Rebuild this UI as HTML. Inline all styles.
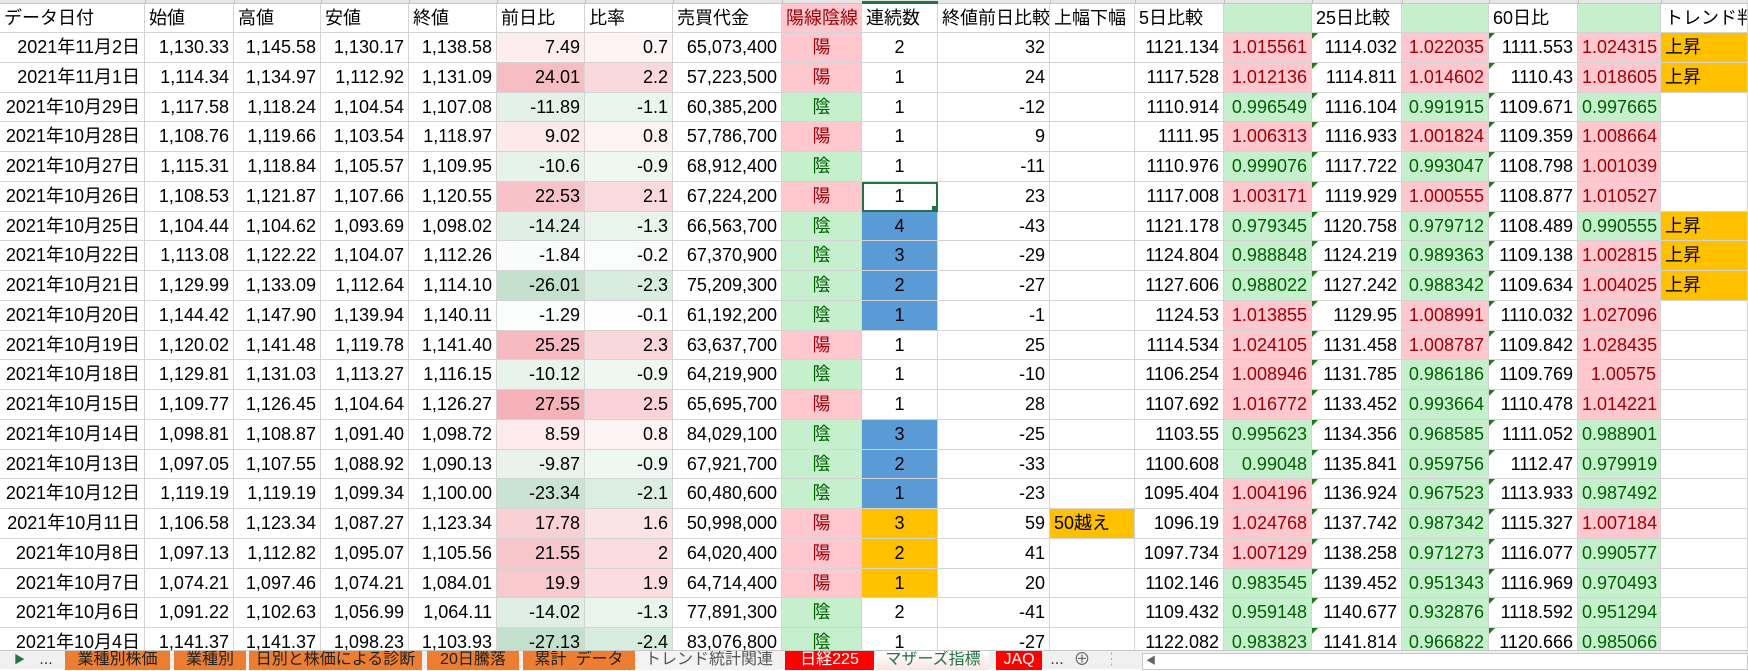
<!DOCTYPE html>
<html><head><meta charset="utf-8">
<style>
*{box-sizing:border-box;margin:0;padding:0}
body{width:1748px;height:669px;overflow:hidden;background:#fff;font-family:"Liberation Sans","Noto Sans CJK JP",sans-serif;font-size:18px;color:#000;position:relative}
.top{position:absolute;left:0;top:0;width:1748px;height:4px;background:#e6e6e6;border-bottom:1px solid #c8c8c8}
.top i{position:absolute;top:0;width:1px;height:4px;background:#c0c0c0}
.grid{position:absolute;left:0;top:4px}
.row{display:flex;height:29.75px}
.hd{height:29px}
.row>div{flex:none;border-right:1px solid #d4d4d4;border-bottom:1px solid #d4d4d4;white-space:nowrap;overflow:hidden;line-height:28px;padding:0 4px;position:relative}
.hd>div{line-height:28px;padding-left:4px}
.r{text-align:right}.c{text-align:center}
.p{background:#ffc7ce;color:#9c0006}
.g{background:#c6efce;color:#006100}
.o{background:#ffc000}
.b{background:#5b9bd5}
.t::before{content:"";position:absolute;left:0;top:0;border-top:6px solid #1f7a1f;border-right:6px solid transparent}
.sel{outline:2px solid #217346;outline-offset:-2px}
.sel::after{content:"";position:absolute;right:-1px;bottom:-1px;width:6px;height:6px;background:#217346}
.w0{width:145px}.w1{width:89px}.w2{width:87px}.w3{width:88px}.w4{width:88px}.w5{width:88px}.w6{width:88px}.w7{width:109px}.w8{width:80px}.w9{width:76px}.w10{width:112px}.w11{width:85px}.w12{width:89px}.w13{width:88px}.w14{width:90px}.w15{width:87px}.w16{width:89px}.w17{width:83px}.w18{width:87px}
.tabs{position:absolute;left:0;top:650px;width:1748px;height:19px;background:#f0f0f0;border-top:1px solid #c8c8c8;font-size:16px;line-height:18px}
.tab{position:absolute;top:0;height:19px;text-align:center;overflow:hidden;white-space:nowrap}
.or{background:#ed7d31;color:#222}
.rd{background:#ff0000;color:#fff}
</style></head><body>
<div class="top"><i style="left:145px"></i><i style="left:234px"></i><i style="left:321px"></i><i style="left:409px"></i><i style="left:497px"></i><i style="left:585px"></i><i style="left:673px"></i><i style="left:782px"></i><i style="left:1050px"></i><i style="left:1135px"></i><i style="left:1224px"></i><i style="left:1312px"></i><i style="left:1402px"></i><i style="left:1489px"></i><i style="left:1578px"></i><i style="left:1661px"></i><div style="position:absolute;left:862px;top:1px;width:76px;height:3px;background:#217346"></div></div>
<div class="grid">
<div class="row hd"><div class="w0">データ日付</div><div class="w1">始値</div><div class="w2">高値</div><div class="w3">安値</div><div class="w4">終値</div><div class="w5">前日比</div><div class="w6">比率</div><div class="w7">売買代金</div><div class="w8 p">陽線陰線</div><div class="w9">連続数</div><div class="w10">終値前日比較</div><div class="w11">上幅下幅</div><div class="w12">5日比較</div><div class="w13 g"></div><div class="w14">25日比較</div><div class="w15 g"></div><div class="w16">60日比</div><div class="w17 g"></div><div class="w18">トレンド判</div></div>

<div class="row"><div class="w0 r">2021年11月2日</div><div class="w1 r">1,130.33</div><div class="w2 r">1,145.58</div><div class="w3 r">1,130.17</div><div class="w4 r">1,138.58</div><div class="w5 r" style="background:#feedee">7.49</div><div class="w6 r" style="background:#fef4f5">0.7</div><div class="w7 r">65,073,400</div><div class="w8 c p">陽</div><div class="w9 c">2</div><div class="w10 r">32</div><div class="w11"></div><div class="w12 r">1121.134</div><div class="w13 r p">1.015561</div><div class="w14 r t">1114.032</div><div class="w15 r p">1.022035</div><div class="w16 r t">1111.553</div><div class="w17 r p">1.024315</div><div class="w18 o">上昇</div></div>
<div class="row"><div class="w0 r">2021年11月1日</div><div class="w1 r">1,114.34</div><div class="w2 r">1,134.97</div><div class="w3 r">1,112.92</div><div class="w4 r">1,131.09</div><div class="w5 r" style="background:#f6bec3">24.01</div><div class="w6 r" style="background:#fad8db">2.2</div><div class="w7 r">57,223,500</div><div class="w8 c p">陽</div><div class="w9 c">1</div><div class="w10 r">24</div><div class="w11"></div><div class="w12 r">1117.528</div><div class="w13 r p">1.012136</div><div class="w14 r t">1114.811</div><div class="w15 r p">1.014602</div><div class="w16 r t">1110.43</div><div class="w17 r p">1.018605</div><div class="w18 o">上昇</div></div>
<div class="row"><div class="w0 r">2021年10月29日</div><div class="w1 r">1,117.58</div><div class="w2 r">1,118.24</div><div class="w3 r">1,104.54</div><div class="w4 r">1,107.08</div><div class="w5 r" style="background:#e4f1e8">-11.89</div><div class="w6 r" style="background:#ebf5ef">-1.1</div><div class="w7 r">60,385,200</div><div class="w8 c g">陰</div><div class="w9 c">1</div><div class="w10 r">-12</div><div class="w11"></div><div class="w12 r">1110.914</div><div class="w13 r g">0.996549</div><div class="w14 r t">1116.104</div><div class="w15 r g">0.991915</div><div class="w16 r t">1109.671</div><div class="w17 r g">0.997665</div><div class="w18"></div></div>
<div class="row"><div class="w0 r">2021年10月28日</div><div class="w1 r">1,108.76</div><div class="w2 r">1,119.66</div><div class="w3 r">1,103.54</div><div class="w4 r">1,118.97</div><div class="w5 r" style="background:#fce9ea">9.02</div><div class="w6 r" style="background:#fef3f4">0.8</div><div class="w7 r">57,786,700</div><div class="w8 c p">陽</div><div class="w9 c">1</div><div class="w10 r">9</div><div class="w11"></div><div class="w12 r">1111.95</div><div class="w13 r p">1.006313</div><div class="w14 r t">1116.933</div><div class="w15 r p">1.001824</div><div class="w16 r t">1109.359</div><div class="w17 r p">1.008664</div><div class="w18"></div></div>
<div class="row"><div class="w0 r">2021年10月27日</div><div class="w1 r">1,115.31</div><div class="w2 r">1,118.84</div><div class="w3 r">1,105.57</div><div class="w4 r">1,109.95</div><div class="w5 r" style="background:#e7f2ea">-10.6</div><div class="w6 r" style="background:#eef7f1">-0.9</div><div class="w7 r">68,912,400</div><div class="w8 c g">陰</div><div class="w9 c">1</div><div class="w10 r">-11</div><div class="w11"></div><div class="w12 r">1110.976</div><div class="w13 r g">0.999076</div><div class="w14 r t">1117.722</div><div class="w15 r g">0.993047</div><div class="w16 r t">1108.798</div><div class="w17 r p">1.001039</div><div class="w18"></div></div>
<div class="row"><div class="w0 r">2021年10月26日</div><div class="w1 r">1,108.53</div><div class="w2 r">1,121.87</div><div class="w3 r">1,107.66</div><div class="w4 r">1,120.55</div><div class="w5 r" style="background:#f7c3c8">22.53</div><div class="w6 r" style="background:#fadadd">2.1</div><div class="w7 r">67,224,200</div><div class="w8 c p">陽</div><div class="w9 c sel" style="overflow:visible">1</div><div class="w10 r">23</div><div class="w11"></div><div class="w12 r">1117.008</div><div class="w13 r p">1.003171</div><div class="w14 r t">1119.929</div><div class="w15 r p">1.000555</div><div class="w16 r t">1108.877</div><div class="w17 r p">1.010527</div><div class="w18"></div></div>
<div class="row"><div class="w0 r">2021年10月25日</div><div class="w1 r">1,104.44</div><div class="w2 r">1,104.62</div><div class="w3 r">1,093.69</div><div class="w4 r">1,098.02</div><div class="w5 r" style="background:#e0efe6">-14.24</div><div class="w6 r" style="background:#e9f4ec">-1.3</div><div class="w7 r">66,563,700</div><div class="w8 c g">陰</div><div class="w9 c b">4</div><div class="w10 r">-43</div><div class="w11"></div><div class="w12 r">1121.178</div><div class="w13 r g">0.979345</div><div class="w14 r t">1120.758</div><div class="w15 r g">0.979712</div><div class="w16 r t">1108.489</div><div class="w17 r g">0.990555</div><div class="w18 o">上昇</div></div>
<div class="row"><div class="w0 r">2021年10月22日</div><div class="w1 r">1,113.08</div><div class="w2 r">1,122.22</div><div class="w3 r">1,104.07</div><div class="w4 r">1,112.26</div><div class="w5 r" style="background:#f9fcfa">-1.84</div><div class="w6 r" style="background:#fbfdfc">-0.2</div><div class="w7 r">67,370,900</div><div class="w8 c g">陰</div><div class="w9 c b">3</div><div class="w10 r">-29</div><div class="w11"></div><div class="w12 r">1124.804</div><div class="w13 r g">0.988848</div><div class="w14 r t">1124.219</div><div class="w15 r g">0.989363</div><div class="w16 r t">1109.138</div><div class="w17 r p">1.002815</div><div class="w18 o">上昇</div></div>
<div class="row"><div class="w0 r">2021年10月21日</div><div class="w1 r">1,129.99</div><div class="w2 r">1,133.09</div><div class="w3 r">1,112.64</div><div class="w4 r">1,114.10</div><div class="w5 r" style="background:#c4e1ce">-26.01</div><div class="w6 r" style="background:#d9ece0">-2.3</div><div class="w7 r">75,209,300</div><div class="w8 c g">陰</div><div class="w9 c b">2</div><div class="w10 r">-27</div><div class="w11"></div><div class="w12 r">1127.606</div><div class="w13 r g">0.988022</div><div class="w14 r t">1127.242</div><div class="w15 r g">0.988342</div><div class="w16 r t">1109.634</div><div class="w17 r p">1.004025</div><div class="w18 o">上昇</div></div>
<div class="row"><div class="w0 r">2021年10月20日</div><div class="w1 r">1,144.42</div><div class="w2 r">1,147.90</div><div class="w3 r">1,139.94</div><div class="w4 r">1,140.11</div><div class="w5 r" style="background:#fbfdfc">-1.29</div><div class="w6 r" style="background:#fdfefd">-0.1</div><div class="w7 r">61,192,200</div><div class="w8 c g">陰</div><div class="w9 c b">1</div><div class="w10 r">-1</div><div class="w11"></div><div class="w12 r">1124.53</div><div class="w13 r p">1.013855</div><div class="w14 r t">1129.95</div><div class="w15 r p">1.008991</div><div class="w16 r t">1110.032</div><div class="w17 r p">1.027096</div><div class="w18"></div></div>
<div class="row"><div class="w0 r">2021年10月19日</div><div class="w1 r">1,120.02</div><div class="w2 r">1,141.48</div><div class="w3 r">1,119.78</div><div class="w4 r">1,141.40</div><div class="w5 r" style="background:#f6bac0">25.25</div><div class="w6 r" style="background:#f9d6d9">2.3</div><div class="w7 r">63,637,700</div><div class="w8 c p">陽</div><div class="w9 c">1</div><div class="w10 r">25</div><div class="w11"></div><div class="w12 r">1114.534</div><div class="w13 r p">1.024105</div><div class="w14 r t">1131.458</div><div class="w15 r p">1.008787</div><div class="w16 r t">1109.842</div><div class="w17 r p">1.028435</div><div class="w18"></div></div>
<div class="row"><div class="w0 r">2021年10月18日</div><div class="w1 r">1,129.81</div><div class="w2 r">1,131.03</div><div class="w3 r">1,113.27</div><div class="w4 r">1,116.15</div><div class="w5 r" style="background:#e8f3ec">-10.12</div><div class="w6 r" style="background:#eef7f1">-0.9</div><div class="w7 r">64,219,900</div><div class="w8 c g">陰</div><div class="w9 c">1</div><div class="w10 r">-10</div><div class="w11"></div><div class="w12 r">1106.254</div><div class="w13 r p">1.008946</div><div class="w14 r t">1131.785</div><div class="w15 r g">0.986186</div><div class="w16 r t">1109.769</div><div class="w17 r p">1.00575</div><div class="w18"></div></div>
<div class="row"><div class="w0 r">2021年10月15日</div><div class="w1 r">1,109.77</div><div class="w2 r">1,126.45</div><div class="w3 r">1,104.64</div><div class="w4 r">1,126.27</div><div class="w5 r" style="background:#f5b3b9">27.55</div><div class="w6 r" style="background:#f9d3d7">2.5</div><div class="w7 r">65,695,700</div><div class="w8 c p">陽</div><div class="w9 c">1</div><div class="w10 r">28</div><div class="w11"></div><div class="w12 r">1107.692</div><div class="w13 r p">1.016772</div><div class="w14 r t">1133.452</div><div class="w15 r g">0.993664</div><div class="w16 r t">1110.478</div><div class="w17 r p">1.014221</div><div class="w18"></div></div>
<div class="row"><div class="w0 r">2021年10月14日</div><div class="w1 r">1,098.81</div><div class="w2 r">1,108.87</div><div class="w3 r">1,091.40</div><div class="w4 r">1,098.72</div><div class="w5 r" style="background:#fceaec">8.59</div><div class="w6 r" style="background:#fef3f4">0.8</div><div class="w7 r">84,029,100</div><div class="w8 c g">陰</div><div class="w9 c b">3</div><div class="w10 r">-25</div><div class="w11"></div><div class="w12 r">1103.55</div><div class="w13 r g">0.995623</div><div class="w14 r t">1134.356</div><div class="w15 r g">0.968585</div><div class="w16 r t">1111.052</div><div class="w17 r g">0.988901</div><div class="w18"></div></div>
<div class="row"><div class="w0 r">2021年10月13日</div><div class="w1 r">1,097.05</div><div class="w2 r">1,107.55</div><div class="w3 r">1,088.92</div><div class="w4 r">1,090.13</div><div class="w5 r" style="background:#e9f3ec">-9.87</div><div class="w6 r" style="background:#eef7f1">-0.9</div><div class="w7 r">67,921,700</div><div class="w8 c g">陰</div><div class="w9 c b">2</div><div class="w10 r">-33</div><div class="w11"></div><div class="w12 r">1100.608</div><div class="w13 r g">0.99048</div><div class="w14 r t">1135.841</div><div class="w15 r g">0.959756</div><div class="w16 r t">1112.47</div><div class="w17 r g">0.979919</div><div class="w18"></div></div>
<div class="row"><div class="w0 r">2021年10月12日</div><div class="w1 r">1,119.19</div><div class="w2 r">1,119.19</div><div class="w3 r">1,099.34</div><div class="w4 r">1,100.00</div><div class="w5 r" style="background:#cae3d3">-23.34</div><div class="w6 r" style="background:#dcede2">-2.1</div><div class="w7 r">60,480,600</div><div class="w8 c g">陰</div><div class="w9 c b">1</div><div class="w10 r">-23</div><div class="w11"></div><div class="w12 r">1095.404</div><div class="w13 r p">1.004196</div><div class="w14 r t">1136.924</div><div class="w15 r g">0.967523</div><div class="w16 r t">1113.933</div><div class="w17 r g">0.987492</div><div class="w18"></div></div>
<div class="row"><div class="w0 r">2021年10月11日</div><div class="w1 r">1,106.58</div><div class="w2 r">1,123.34</div><div class="w3 r">1,087.27</div><div class="w4 r">1,123.34</div><div class="w5 r" style="background:#f9d0d4">17.78</div><div class="w6 r" style="background:#fce4e6">1.6</div><div class="w7 r">50,998,000</div><div class="w8 c p">陽</div><div class="w9 c o">3</div><div class="w10 r">59</div><div class="w11 o">50越え</div><div class="w12 r">1096.19</div><div class="w13 r p">1.024768</div><div class="w14 r t">1137.742</div><div class="w15 r g">0.987342</div><div class="w16 r t">1115.327</div><div class="w17 r p">1.007184</div><div class="w18"></div></div>
<div class="row"><div class="w0 r">2021年10月8日</div><div class="w1 r">1,097.13</div><div class="w2 r">1,112.82</div><div class="w3 r">1,095.07</div><div class="w4 r">1,105.56</div><div class="w5 r" style="background:#f7c6ca">21.55</div><div class="w6 r" style="background:#fbdcdf">2</div><div class="w7 r">64,020,400</div><div class="w8 c p">陽</div><div class="w9 c o">2</div><div class="w10 r">41</div><div class="w11"></div><div class="w12 r">1097.734</div><div class="w13 r p">1.007129</div><div class="w14 r t">1138.258</div><div class="w15 r g">0.971273</div><div class="w16 r t">1116.077</div><div class="w17 r g">0.990577</div><div class="w18"></div></div>
<div class="row"><div class="w0 r">2021年10月7日</div><div class="w1 r">1,074.21</div><div class="w2 r">1,097.46</div><div class="w3 r">1,074.21</div><div class="w4 r">1,084.01</div><div class="w5 r" style="background:#f8cace">19.9</div><div class="w6 r" style="background:#fbdde0">1.9</div><div class="w7 r">64,714,400</div><div class="w8 c p">陽</div><div class="w9 c o">1</div><div class="w10 r">20</div><div class="w11"></div><div class="w12 r">1102.146</div><div class="w13 r g">0.983545</div><div class="w14 r t">1139.452</div><div class="w15 r g">0.951343</div><div class="w16 r t">1116.969</div><div class="w17 r g">0.970493</div><div class="w18"></div></div>
<div class="row"><div class="w0 r">2021年10月6日</div><div class="w1 r">1,091.22</div><div class="w2 r">1,102.63</div><div class="w3 r">1,056.99</div><div class="w4 r">1,064.11</div><div class="w5 r" style="background:#e0efe6">-14.02</div><div class="w6 r" style="background:#e9f4ec">-1.3</div><div class="w7 r">77,891,300</div><div class="w8 c g">陰</div><div class="w9 c">2</div><div class="w10 r">-41</div><div class="w11"></div><div class="w12 r">1109.432</div><div class="w13 r g">0.959148</div><div class="w14 r t">1140.677</div><div class="w15 r g">0.932876</div><div class="w16 r t">1118.592</div><div class="w17 r g">0.951294</div><div class="w18"></div></div>
<div class="row"><div class="w0 r">2021年10月4日</div><div class="w1 r">1,141.37</div><div class="w2 r">1,141.37</div><div class="w3 r">1,098.23</div><div class="w4 r">1,103.93</div><div class="w5 r" style="background:#c2e0cc">-27.13</div><div class="w6 r" style="background:#d7ebde">-2.4</div><div class="w7 r">83,076,800</div><div class="w8 c g">陰</div><div class="w9 c">1</div><div class="w10 r">-27</div><div class="w11"></div><div class="w12 r">1122.082</div><div class="w13 r g">0.983823</div><div class="w14 r t">1141.814</div><div class="w15 r g">0.966822</div><div class="w16 r t">1120.666</div><div class="w17 r g">0.985066</div><div class="w18"></div></div>
</div>

<div class="tabs">
<div class="tab" style="left:14px;width:10px;color:#217346;font-size:11px">&#9654;</div>
<div class="tab" style="left:36px;width:20px;color:#333">...</div>
<div class="tab or" style="left:65px;width:105px">業種別株価</div>
<div class="tab or" style="left:174px;width:72px">業種別</div>
<div class="tab or" style="left:249px;width:173px">日別と株価による診断</div>
<div class="tab or" style="left:427px;width:92px">20日騰落</div>
<div class="tab or" style="left:523px;width:112px">累計&nbsp; データ</div>
<div class="tab" style="left:639px;width:140px;background:#f3f3f3;color:#555">トレンド統計関連</div>
<div class="tab rd" style="left:785px;width:89px">日経225</div>
<div class="tab" style="left:877px;width:112px;background:linear-gradient(#fff,#fbe3e3);color:#217346">マザーズ指標</div>
<div class="tab rd" style="left:996px;width:46px">JAQ</div>
<div class="tab" style="left:1048px;width:18px;color:#333">...</div>
<div class="tab" style="left:1073px;width:18px;color:#666;font-size:17px">&#8853;</div>
<div class="tab" style="left:1104px;width:8px;color:#999">&#8942;</div>
<div style="position:absolute;left:1142px;top:2px;width:606px;height:17px;background:#fff;border:1px solid #c8c8c8"><span style="position:absolute;left:3px;top:-1px;font-size:10px;color:#666">&#9664;</span></div>
</div>
</body></html>
